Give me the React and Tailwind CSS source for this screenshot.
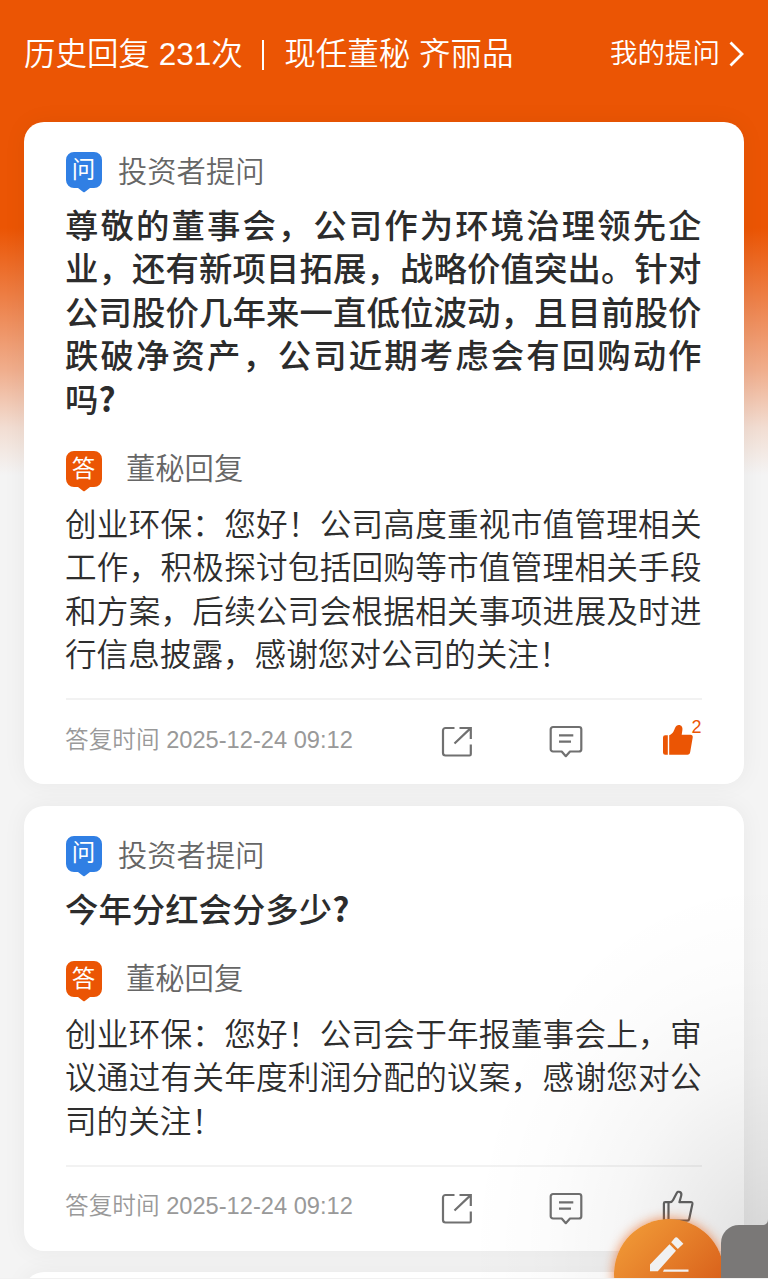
const records = [
    {
        question: [
            '尊敬的董事会，公司作为环境治理领先企',
            '业，还有新项目拓展，战略价值突出。针对',
            '公司股价几年来一直低位波动，且目前股价',
            '跌破净资产，公司近期考虑会有回购动作',
            '吗?',
        ],
        answer: [
            '创业环保：您好！公司高度重视市值管理相关',
            '工作，积极探讨包括回购等市值管理相关手段',
            '和方案，后续公司会根据相关事项进展及时进',
            '行信息披露，感谢您对公司的关注！',
        ],
        time: '2025-12-24 09:12',
        likes: 2,
    },
    {
        question: ['今年分红会分多少?'],
        answer: [
            '创业环保：您好！公司会于年报董事会上，审',
            '议通过有关年度利润分配的议案，感谢您对公',
            '司的关注！',
        ],
        time: '2025-12-24 09:12',
        likes: 0,
    },
]

function Lines({ lines }) {
    return lines.map((line, i) => (
        <span key={line} className={i < lines.length - 1 ? 'block whitespace-nowrap [text-align-last:justify]' : 'block h-[43.4px] whitespace-nowrap'}>
            {line.replace('?', '')}
            {line.endsWith('?') && <span className="font-['Noto_Sans_CJK_SC',sans-serif] leading-none font-bold">?</span>}
        </span>
    ))
}

function Badge({ text, color }) {
    return (
        <div className="relative h-9 w-9 shrink-0" style={{ color }}>
            <svg className="absolute top-0 left-0" width="36" height="41" viewBox="0 0 36 41" fill="currentColor">
                <path d="M8 0h20a8 8 0 0 1 8 8v20a8 8 0 0 1-8 8h-4l-5.2 4a1.4 1.4 0 0 1-1.6 0L12 36H8a8 8 0 0 1-8-8V8a8 8 0 0 1 8-8z" />
            </svg>
            <span className="relative flex h-9 items-center justify-center pt-px text-[23.5px] leading-none font-normal text-white">{text}</span>
        </div>
    )
}

function ShareIcon() {
    return (
        <svg width="32" height="32" viewBox="0 0 32 32" fill="none" stroke="#707070" strokeWidth="2.2">
            <path d="M13.5 2H4.5a2.5 2.5 0 0 0-2.5 2.5v22.5a2.5 2.5 0 0 0 2.5 2.5h24a1.3 1.3 0 0 0 1.3-1.3V18.5" />
            <path d="M18.5 2h11.3v11M29.4 2.4 13.5 17.5" />
        </svg>
    )
}

function CommentIcon() {
    return (
        <svg width="34" height="34" viewBox="0 0 34 34" fill="none" stroke="#707070" strokeWidth="2.2" strokeLinejoin="round">
            <path d="M4 2h26a2.3 2.3 0 0 1 2.3 2.3v19.9a2.3 2.3 0 0 1-2.3 2.3h-9L16.8 31.2 12.7 26.5H4a2.3 2.3 0 0 1-2.3-2.3V4.3A2.3 2.3 0 0 1 4 2z" />
            <path d="M10 10.4h14.3M10 16.7h12" />
        </svg>
    )
}

function ThumbIcon({ filled }) {
    if (filled) {
        return (
            <svg width="32" height="32" viewBox="0 0 32 32" fill="#eb5504">
                <path d="M3.2 11.2h2.6v19.6H3.2A2.2 2.2 0 0 1 1 28.6V13.4a2.2 2.2 0 0 1 2.2-2.2z" />
                <path d="M7.2 11.2c3.4-1 4.6-4 5.8-7.2C13.8 2 15.2 1 16.8 1c2.7 0 4 2.3 3.6 5l-.7 4.8h8.8c1.6 0 2.5 1 2.2 2.6L28.2 28c-.3 1.8-1.2 2.8-2.8 2.8H7.2z" />
            </svg>
        )
    }
    return (
        <svg width="32" height="32" viewBox="0 0 32 32" fill="none" stroke="#646464" strokeWidth="2.2" strokeLinejoin="round">
            <path d="M3.2 12.2h4.6c1.8 0 2.6-.8 3.3-2.2l3.4-6.6c.8-1.6 2.2-2 3.4-1.4 1.3.7 1.7 2.2 1.3 3.7l-1.8 6.5h11.5c1.2 0 1.7.7 1.5 1.8l-3.2 15c-.2 1.1-.9 1.6-1.9 1.6H3.2c-.8 0-1.3-.5-1.3-1.3V13.5c0-.8.5-1.3 1.3-1.3z" />
            <path d="M6.5 12.2v18.6" />
        </svg>
    )
}

function Card({ record }) {
    return (
        <section className="rounded-[20px] bg-white pt-[30px] pr-[42px] pl-[41.5px] shadow-[0_0_24px_rgba(0,0,0,0.05)]">
            <div className="flex items-center gap-[16.5px]">
                <Badge text="问" color="#307fe4" />
                <span className="pt-[3px] text-[29.3px] leading-[33px] text-[#666]">投资者提问</span>
            </div>
            <h2 className="mt-[17px] -ml-[0.5px] text-[33.4px] leading-[43.4px] font-medium text-[#2c2c2c]">
                <Lines lines={record.question} />
            </h2>
            <div className="mt-[29px] flex items-center gap-[24.5px]">
                <Badge text="答" color="#eb5504" />
                <span className="text-[29.3px] leading-9 text-[#666]">董秘回复</span>
            </div>
            <p className="mt-[17px] -ml-[0.5px] text-[31.6px] leading-[43.4px] text-[#2e2e2e]">
                <Lines lines={record.answer} />
            </p>
            <div className="mt-[20.5px] flex h-[86px] items-center border-t-2 border-[#f2f2f2] pr-2">
                <span className="-ml-[0.5px] w-[375.5px] pb-[3px] text-[23.65px] text-[#999]">答复时间 {record.time}</span>
                <ShareIcon />
                <div className="ml-[76px]"><CommentIcon /></div>
                <div className="relative -mt-[5px] ml-[79px]">
                    <ThumbIcon filled={record.likes > 0} />
                    {record.likes > 0 && (
                        <span className="absolute -top-[7px] left-[30px] text-[18px] leading-5 text-[#eb5504]">{record.likes}</span>
                    )}
                </div>
            </div>
        </section>
    )
}

export default function App() {
    return (
        <div
            lang="zh-CN"
            className="relative h-[1279px] w-[768px] overflow-hidden bg-[#f4f4f4] font-['Liberation_Sans','Noto_Sans_CJK_SC',sans-serif] font-[350]"
        >
            <div className="absolute inset-x-0 top-0 h-[475px] bg-[linear-gradient(#eb5504_0%,#eb5504_48%,#ed7d43_62%,#f0ae8d_78%,#f2ddd2_90%,#f4f4f4_100%)]" />
            <div className="relative">
                <header className="flex h-[122px] items-start justify-between pt-[30px] pr-6 pl-6 text-white">
                    <div className="flex text-[31.5px] leading-[49px] whitespace-pre">
                        <span>历史回复 231次</span>
                        <span className="mr-[20px] ml-[19.5px] mt-[10px] h-[30px] w-[2px] bg-white" />
                        <span>现任董秘 齐丽品</span>
                    </div>
                    <div className="flex items-center gap-[9px] text-[27.5px] leading-[48px]">
                        <span>我的提问</span>
                        <svg width="15" height="26" viewBox="0 0 15 26" fill="none" stroke="white" strokeWidth="2.8">
                            <path d="M1.5 1.5 13 13 1.5 24.5" />
                        </svg>
                    </div>
                </header>
                <main className="flex w-[743.5px] flex-col gap-[21.5px] pl-6">
                    {records.map((record, i) => (
                        <Card key={i} record={record} />
                    ))}
                    <section className="h-40 rounded-[20px] bg-white shadow-[0_0_24px_rgba(0,0,0,0.05)]" />
                </main>
            </div>

            {/* soft shade around the floating controls */}
            <div className="absolute right-0 bottom-0 h-[420px] w-[420px] bg-[radial-gradient(ellipse_300px_380px_at_100%_95%,rgba(0,0,0,0.13)_0%,rgba(0,0,0,0.08)_25%,rgba(0,0,0,0.035)_50%,rgba(0,0,0,0.01)_75%,transparent_100%)]" />
            <div className="absolute top-[1219px] left-[614px] h-[110px] w-[110px] rounded-full bg-linear-to-br from-[#f3a03a] to-[#d04c10] shadow-[0_0_12px_rgba(235,85,4,0.65)]">
                <svg className="absolute top-[16px] left-[34px]" width="42" height="40" viewBox="0 0 42 40" fill="#f1f1f1">
                    <path d="M2 29.5 21.5 9.2 28 15.8 9.8 36.2H2zM23.2 7.2 26.5 3.2a2.5 2.5 0 0 1 3.5 0l5.4 5.5-5.6 5.2z" />
                    <path d="M16 34.6h24.5v2.2H15z" />
                </svg>
            </div>
            <div className="absolute top-[1225px] left-[721px] h-[54px] w-[47px] rounded-tl-[18px] bg-[#7a7877]">
                <svg className="absolute -top-[6px] right-0" width="6" height="6" viewBox="0 0 6 6" fill="#7a7877">
                    <path d="M6 0v6H0c4 0 6-2 6-6z" />
                </svg>
            </div>
            <div className="absolute inset-x-0 bottom-0 h-px bg-[#f1f1f1]" />
        </div>
    )
}
